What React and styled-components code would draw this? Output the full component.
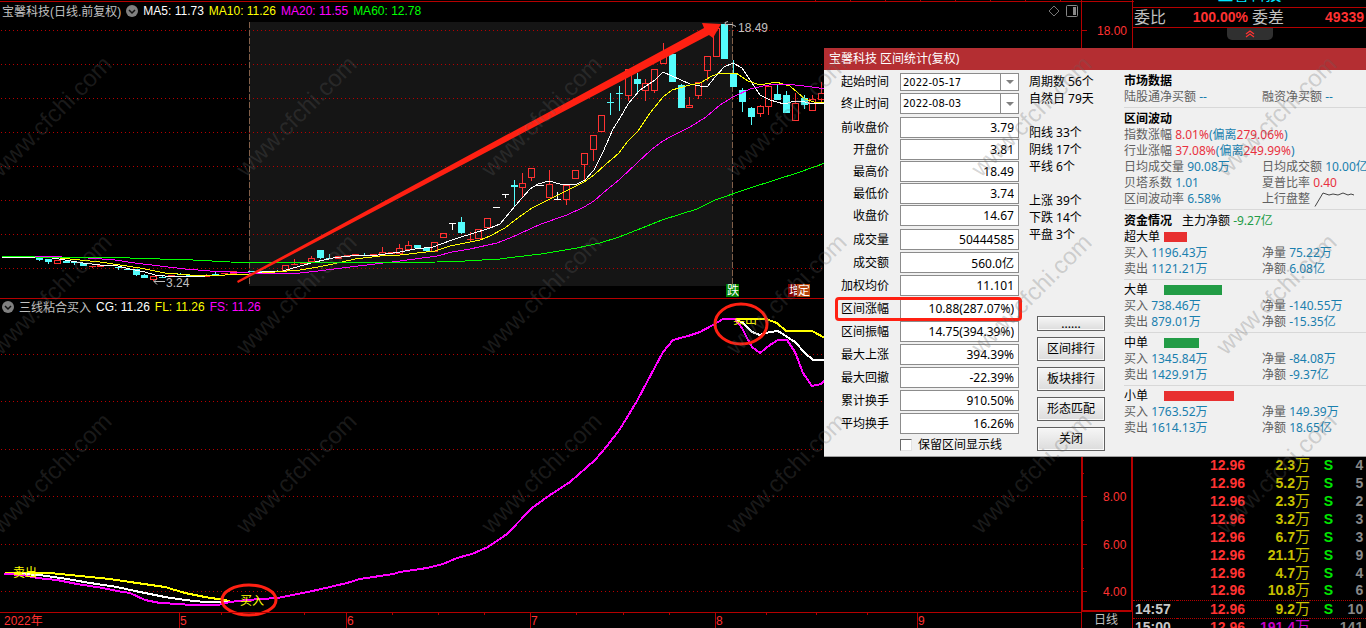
import React from "react";
import styled, { createGlobalStyle, css } from "styled-components";

const SANS = `"Noto Sans", "Noto Sans CJK SC", sans-serif`;
const ARIAL = `"Liberation Sans", "Noto Sans CJK SC", sans-serif`;

const RED = "#ff3232";
const LINE = "#b40000";
const CYAN = "#54fcfc";
const MARK = "#ff2012";

const GlobalStyle = createGlobalStyle`
  * {
    box-sizing: border-box;
  }
  body {
    margin: 0;
    background: #000;
    font-family: ${SANS};
    font-size: 12px;
  }
  button, input, select {
    font: inherit;
    color: inherit;
    margin: 0;
  }
`;

const Page = styled.div`
  position: relative;
  display: grid;
  grid-template-columns: minmax(0, 1fr) 233px;
  height: 100vh;
  min-height: 628px;
  overflow: hidden;
  background: #000;
`;

/* ---------- charts ---------- */

const Board = styled.main`
  display: grid;
  grid-template-columns: minmax(0, 1fr) 52px;
  grid-template-rows: 299px minmax(0, 1fr) 16px;
  font-family: ${ARIAL};
`;

const Panel = styled.section`
  display: flex;
  flex-direction: column;
  min-width: 0;
`;

const PricePanel = styled(Panel)`
  border-bottom: 1px solid ${LINE};
`;

const TickStrip = styled.div`
  height: 2px;
  border-bottom: 1px solid ${LINE};
  background: repeating-linear-gradient(
      to right,
      #000 0 34px,
      ${LINE} 34px 35px
    )
    right / 300px 100% no-repeat;
`;

const PanelHeader = styled.header`
  display: flex;
  align-items: center;
  gap: 5px;
  height: ${(props) => props.$height}px;
  padding: 0 3px 2px 2px;
  color: #c0c0c0;
  white-space: nowrap;
`;

const Title = styled.h2`
  margin: 0;
  font-size: 12px;
  font-weight: 400;
`;

const Legend = styled.span`
  color: ${(props) => props.$color};
`;

const IconButton = styled.button`
  display: flex;
  padding: 0;
  border: 0;
  background: none;
`;

const Tools = styled.div`
  display: flex;
  gap: 6px;
  margin-left: auto;
`;

const Plot = styled.svg`
  display: block;
  width: 100%;
  flex: 1;
  min-height: 0;
  overflow: visible;
`;

const ChartText = styled.text`
  font-family: ${ARIAL};
  font-size: 12px;
  fill: ${(props) => props.$fill};
`;

const Curve = styled.polyline`
  fill: none;
  stroke: ${(props) => props.$color};
  stroke-width: ${(props) => props.$width || 1}px;
  shape-rendering: crispEdges;
`;

const GridLine = styled.line`
  stroke: #b80000;
  stroke-dasharray: 1 3;
  shape-rendering: crispEdges;
`;

const Scale = styled.div`
  display: flex;
  border: 0 solid ${LINE};
  ${(props) =>
    props.$heavy
      ? css`
          border-width: 0 2px 2px 2px;
        `
      : css`
          border-width: 0 1px;
        `}
`;

const TimeAxis = styled.div`
  display: flex;
  border-top: 1px solid ${LINE};
`;

const Period = styled.div`
  padding-left: 12px;
  border: 0 solid ${LINE};
  border-width: 0 1px;
  color: #c0c0c0;
  font-size: 12px;
  line-height: 16px;
`;

// [x, high, top, bottom, low, kind]
const candles = [
  [39, 258, 258, 260, 261, "d"],
  [48, 259, 259, 262, 264, "d"],
  [57, 260, 260, 263, 263, "u"],
  [66, 261, 261, 263, 263, "d"],
  [74, 262, 262, 263, 265, "d"],
  [83, 263, 263, 266, 266, "d"],
  [92, 266, 266, 267, 268, "l"],
  [100, 265, 265, 267, 267, "l"],
  [118, 266, 267, 268, 270, "d"],
  [127, 268, 269, 270, 270, "d"],
  [136, 269, 269, 275, 276, "d"],
  [144, 274, 275, 278, 278, "d"],
  [153, 276, 276, 279, 281, "u"],
  [162, 275, 277, 278, 278, "d"],
  [171, 275, 275, 276, 276, "l"],
  [180, 273, 274, 275, 275, "d"],
  [189, 275, 275, 276, 276, "d"],
  [198, 276, 276, 277, 277, "l"],
  [206, 274, 275, 277, 277, "l"],
  [215, 272, 274, 275, 275, "d"],
  [224, 273, 273, 274, 274, "l"],
  [233, 271, 271, 274, 274, "l"],
  [242, 272, 272, 273, 273, "l"],
  [251, 271, 271, 272, 272, "d"],
  [260, 269, 271, 272, 272, "d"],
  [277, 270, 271, 272, 272, "d"],
  [285, 265, 265, 270, 270, "u"],
  [294, 259, 264, 265, 265, "l"],
  [303, 262, 262, 264, 264, "l"],
  [311, 256, 258, 261, 263, "u"],
  [320, 250, 250, 258, 259, "d"],
  [329, 254, 258, 259, 259, "d"],
  [338, 256, 256, 258, 258, "u"],
  [347, 255, 255, 257, 257, "l"],
  [355, 254, 254, 256, 256, "l"],
  [364, 253, 255, 256, 256, "d"],
  [373, 254, 254, 255, 255, "l"],
  [382, 247, 252, 255, 255, "u"],
  [391, 252, 252, 254, 254, "l"],
  [399, 244, 248, 253, 253, "u"],
  [408, 241, 245, 249, 249, "u"],
  [417, 245, 245, 248, 248, "d"],
  [426, 247, 248, 251, 251, "d"],
  [434, 242, 242, 251, 251, "u"],
  [443, 233, 233, 237, 237, "u"],
  [452, 223, 223, 224, 230, "w"],
  [461, 217, 222, 233, 234, "d"],
  [470, 232, 239, 240, 241, "l"],
  [478, 229, 229, 238, 238, "u"],
  [487, 218, 218, 227, 227, "u"],
  [496, 207, 207, 208, 208, "w"],
  [505, 194, 194, 195, 198, "w"],
  [514, 180, 185, 187, 207, "d"],
  [522, 173, 183, 187, 198, "u"],
  [531, 168, 168, 177, 181, "u"],
  [540, 185, 185, 186, 186, "w"],
  [549, 170, 184, 197, 197, "u"],
  [557, 192, 199, 200, 200, "w"],
  [566, 185, 185, 199, 205, "u"],
  [575, 170, 170, 178, 178, "u"],
  [584, 153, 153, 164, 180, "u"],
  [593, 135, 135, 149, 161, "u"],
  [601, 115, 115, 131, 131, "u"],
  [610, 93, 102, 103, 115, "d"],
  [619, 86, 93, 94, 111, "d"],
  [628, 69, 69, 95, 101, "u"],
  [637, 73, 79, 84, 94, "d"],
  [645, 79, 83, 90, 101, "u"],
  [654, 69, 69, 90, 93, "u"],
  [663, 43, 55, 63, 63, "u"],
  [672, 54, 54, 82, 82, "d"],
  [681, 84, 85, 108, 108, "d"],
  [689, 97, 105, 107, 107, "u"],
  [698, 82, 82, 95, 99, "u"],
  [707, 56, 56, 70, 81, "u"],
  [716, 28, 28, 56, 56, "u"],
  [724, 24, 24, 59, 59, "d"],
  [733, 60, 73, 87, 87, "d"],
  [742, 88, 90, 102, 112, "d"],
  [751, 107, 108, 117, 125, "d"],
  [760, 105, 106, 113, 117, "u"],
  [768, 85, 86, 106, 115, "u"],
  [777, 84, 94, 100, 100, "d"],
  [786, 91, 95, 113, 113, "d"],
  [795, 93, 103, 120, 120, "u"],
  [804, 95, 98, 105, 109, "d"],
  [812, 95, 99, 110, 111, "u"],
  [821, 82, 93, 99, 102, "u"],
];

const ma5 =
  "2,257 28,257 52,258 65,260 83,263 100,265 118,266 130,269 145,272 155,275 165,276 205,276 225,275 249,274 262,272 283,271 300,266 315,262 333,258 350,256 378,255 400,252 415,249 433,247 452,240 461,237 471,234 490,228 500,224 515,206 530,189 538,184 549,181 560,184 577,184 585,180 594,170 603,152 613,129 620,118 628,104 640,90 655,80 663,72 672,76 690,84 700,86 707,87 715,77 724,67 733,63 742,68 750,80 760,95 770,100 784,104 795,101 805,102 812,104 825,103";
const ma10 =
  "2,256 45,257 60,258 80,260 100,262 120,265 140,268 165,273 190,275 225,275 249,274 275,272 300,270 318,267 333,264 355,259 380,256 400,255 435,251 450,246 465,243 480,240 490,236 505,228 515,220 532,208 550,199 566,191 584,182 594,175 605,165 619,153 628,141 638,131 650,113 663,97 672,90 690,85 700,83 712,76 720,73 736,73 748,81 760,85 776,82 790,86 798,93 805,99 814,102 825,102";
const ma20 =
  "2,256 35,256 62,257 88,258 115,260 135,263 160,266 185,269 210,271 249,273 300,273 318,271 350,267 400,261 437,256 452,252 470,249 497,243 510,238 530,229 541,224 567,215 584,207 594,201 603,193 620,179 637,163 651,150 663,141 672,136 690,127 706,117 720,105 733,97 750,89 763,86 775,84 795,85 812,87 825,89";
const ma60 =
  "2,256 35,257 62,257 130,258 160,259 193,260 230,262 290,263 437,262 465,261 500,259 515,257 541,254 577,248 600,243 619,237 637,230 662,220 697,209 715,200 750,188 775,180 800,172 825,163";

const fs =
  "4,574 23,575 37,578 57,580 77,584 103,588 117,591 130,593 145,600 160,603 180,604 190,605 218,605 230,602 247,600 277,598 293,595 317,590 347,583 360,579 393,574 400,572 427,568 443,564 457,558 472,554 488,547 507,534 532,508 550,495 570,482 595,460 607,446 620,429 637,401 647,382 655,367 663,352 673,340 688,336 700,332 713,325 723,319 735,319 742,328 747,338 752,347 760,353 770,345 778,340 787,340 795,352 803,373 812,386 821,384 825,380";
const cgLeft =
  "22,574 40,575 67,579 90,583 117,587 135,591 150,594 165,597 185,600 205,602 230,602";
const cgRight =
  "735,320 742,322 752,332 760,335 770,332 778,331 795,342 805,353 813,360 825,360";
const flLeft =
  "5,573 50,573 70,575 110,579 130,582 165,587 185,593 205,597 230,601";
const flRight = "733,319 766,319 777,323 786,331 812,331 825,338";

function Candle({ data }) {
  const [x, high, top, bottom, low, kind] = data;
  const color = { u: RED, l: RED, d: CYAN, w: "#fff" }[kind];
  const hollow = kind === "u";
  return (
    <g fill={color} shapeRendering="crispEdges">
      <rect x={x} y={high} width="1" height={top - high} />
      <rect x={x} y={bottom} width="1" height={low - bottom} />
      {hollow ? (
        <rect
          x={x - 2.5}
          y={top + 0.5}
          width="6"
          height={bottom - top}
          fill="none"
          stroke={color}
        />
      ) : (
        <rect x={x - 3} y={top} width="7" height={bottom - top} />
      )}
    </g>
  );
}

function MenuDot() {
  return (
    <IconButton aria-label="菜单">
      <svg width="12" height="12" viewBox="0 0 12 12">
        <circle cx="6" cy="6" r="6" fill="#808080" />
        <path d="M3 5l3 3 3-3" fill="none" stroke="#111" strokeWidth="1.5" />
      </svg>
    </IconButton>
  );
}

function Tag({ x, color, children }) {
  return (
    <g>
      <rect x={x} y="284" width="13" height="13" fill={color} />
      <ChartText x={x + 1} y="295" $fill="#fff">
        {children}
      </ChartText>
    </g>
  );
}

function PriceChart() {
  return (
    <PricePanel>
      <TickStrip />
      <PanelHeader $height={19}>
        <Title>宝馨科技(日线.前复权)</Title>
        <MenuDot />
        <Legend $color="#fff">MA5: 11.73</Legend>
        <Legend $color="#ff0">MA10: 11.26</Legend>
        <Legend $color="#f0f">MA20: 11.55</Legend>
        <Legend $color="#0f0">MA60: 12.78</Legend>
        <Tools>
          <IconButton aria-label="标记">
            <svg width="12" height="12" viewBox="0 0 12 12">
              <path d="M6 1l5 5-5 5-5-5z" fill="none" stroke="#777" />
            </svg>
          </IconButton>
          <IconButton aria-label="侧栏">
            <svg width="12" height="12" viewBox="0 0 12 12">
              <rect
                x="0.5"
                y="0.5"
                width="11"
                height="11"
                rx="1"
                fill="none"
                stroke="#888"
              />
              <rect x="7" y="2" width="3" height="8" fill="#888" />
            </svg>
          </IconButton>
        </Tools>
      </PanelHeader>
      <Plot>
        <g transform="translate(0,-21)">
          <rect x="249" y="22" width="484" height="264" fill="#151515" />
          {[30, 64, 98, 132, 166, 200, 234, 268].map((y) => (
            <GridLine key={y} x1="1" x2="100%" y1={y + 0.5} y2={y + 0.5} />
          ))}
          {[249.5, 732.5].map((x) => (
            <line
              key={x}
              x1={x}
              x2={x}
              y1="22"
              y2="285"
              stroke="#82604a"
              strokeDasharray="6 2"
            />
          ))}
          {candles.map((c) => (
            <Candle key={c[0]} data={c} />
          ))}
          <Curve $color="#fff" points={ma5} />
          <Curve $color="#ff0" points={ma10} />
          <Curve $color="#f0f" points={ma20} />
          <Curve $color="#0f0" points={ma60} />
          <g fill="none" stroke="#c0c0c0">
            <path d="M165 281.5h-11M157 278.5l-3 3 3 3" />
            <path d="M736 26.5l-4-2h-6M728 21.5l-3 1 1 4" />
          </g>
          <ChartText x="166" y="287" $fill="#c0c0c0">
            3.24
          </ChartText>
          <ChartText x="738" y="32" $fill="#c0c0c0">
            18.49
          </ChartText>
          <Tag x={726} color="#008000">
            跌
          </Tag>
          <Tag x={788} color="#800000">
            增
          </Tag>
          <Tag x={797} color="#b8460c">
            定
          </Tag>
          <polygon
            points="237,281 704,28 702,23 721,24 713,38 709,35 238,283"
            fill={MARK}
          />
        </g>
      </Plot>
    </PricePanel>
  );
}

function IndicatorChart() {
  return (
    <Panel>
      <PanelHeader $height={17}>
        <MenuDot />
        <Title>三线粘合买入</Title>
        <Legend $color="#fff">CG: 11.26</Legend>
        <Legend $color="#ff0">FL: 11.26</Legend>
        <Legend $color="#f0f">FS: 11.26</Legend>
      </PanelHeader>
      <Plot>
        <defs>
          <clipPath id="panel">
            <rect x="0" y="318" width="100%" height="294" />
          </clipPath>
        </defs>
        <g transform="translate(0,-316)">
          {[354, 401, 449, 496, 544, 591].map((y) => (
            <GridLine key={y} x1="1" x2="100%" y1={y + 0.5} y2={y + 0.5} />
          ))}
          <Curve $color="#ff0" $width={2} points={flLeft} />
          <Curve $color="#fff" $width={2} points={cgLeft} />
          <Curve $color="#ff0" $width={2} points={flRight} />
          <Curve $color="#fff" $width={2} points={cgRight} />
          <Curve $color="#f0f" $width={2} points={fs} />
          <g clipPath="url(#panel)">
            <ChartText x="13" y="577" $fill="#ff0">
              卖出
            </ChartText>
            <ChartText x="240" y="605" $fill="#ff0">
              买入
            </ChartText>
            <ChartText x="733" y="324" $fill="#ff0">
              卖出
            </ChartText>
          </g>
          <g fill="none" stroke={MARK} strokeWidth="3">
            <ellipse cx="249" cy="600" rx="27" ry="15" />
            <ellipse cx="741" cy="324" rx="26" ry="20" />
          </g>
        </g>
      </Plot>
    </Panel>
  );
}

const months = [
  [179, "5"],
  [346, "6"],
  [530, "7"],
  [715, "8"],
  [917, "9"],
];
const weeks = [221, 304, 392, 438, 484, 576, 623, 669, 766, 816, 867];

function Charts() {
  return (
    <Board>
      <PriceChart />
      <Scale>
        <Plot>
          <path d="M0 1.5h52M0 30.5h5" stroke={LINE} />
          <ChartText x="15" y="35" $fill={RED}>
            18.00
          </ChartText>
        </Plot>
      </Scale>
      <IndicatorChart />
      <Scale $heavy>
        <Plot>
          <path
            d="M0 197.5h4M0 245.5h4M0 292.5h4M0 174.5h1M0 221.5h1M0 269.5h1"
            stroke={LINE}
          />
          <ChartText x="20" y="202" $fill={RED}>
            8.00
          </ChartText>
          <ChartText x="20" y="250" $fill={RED}>
            6.00
          </ChartText>
          <ChartText x="20" y="297" $fill={RED}>
            4.00
          </ChartText>
        </Plot>
      </Scale>
      <TimeAxis>
        <Plot>
          <ChartText x="4" y="12" $fill={RED}>
            2022年
          </ChartText>
          {months.map(([x, label]) => (
            <g key={label}>
              <rect x={x} y="0" width="1" height="15" fill={LINE} />
              <ChartText x={x + 1} y="12" $fill={RED}>
                {label}
              </ChartText>
            </g>
          ))}
          {weeks.map((x) => (
            <rect key={x} x={x} y="0" width="1" height="2" fill={LINE} />
          ))}
        </Plot>
      </TimeAxis>
      <Period>日线</Period>
    </Board>
  );
}

/* ---------- quote column ---------- */

const Quote = styled.aside`
  display: flex;
  flex-direction: column;
  overflow: hidden;
  font-family: ${ARIAL};
  font-size: 14px;
`;

const StockName = styled.div`
  display: flex;
  align-items: flex-end;
  justify-content: center;
  height: 7px;
  padding-bottom: 2px;
  overflow: hidden;
  color: #00e5ff;
  font-size: 16px;
  line-height: 20px;
`;

const Commission = styled.div`
  display: grid;
  grid-template-columns: 34px 80px 36px 1fr;
  align-items: center;
  height: 21px;
  padding: 0 2px 0 1px;
  border: solid ${LINE};
  border-width: 1px 0;
  color: #c0c0c0;
  font-size: 16px;
  line-height: 19px;

  b {
    color: ${RED};
    font-size: 14px;
    text-align: right;
  }
  span:nth-of-type(2) {
    padding-left: 4px;
  }
`;

const Collapse = styled.button`
  display: flex;
  justify-content: center;
  align-self: center;
  width: 46px;
  height: 12px;
  padding: 2px 0 0;
  border: 0;
  border-radius: 0 0 5px 5px;
  background: #303030;
`;

const DealsBox = styled.div`
  height: 172px;
  margin-top: auto;
  overflow: hidden;
`;

const Deals = styled.table`
  width: 100%;
  table-layout: fixed;
  border-collapse: collapse;
  font-weight: 700;
`;

const Deal = styled.tr`
  height: 18px;
  border-top: ${(props) => (props.$time ? `1px dotted ${LINE}` : "0")};
`;

const Cell = styled.td`
  padding: 0 0 0 2px;
  color: ${(props) => props.$color};
  line-height: 17px;
  text-align: ${(props) => props.$align || "right"};
  white-space: nowrap;

  small {
    font-size: 15px;
    font-weight: 400;
    line-height: 1;
  }
`;

const deals = [
  ["", "2.3", "4"],
  ["", "5.2", "5"],
  ["", "2.3", "2"],
  ["", "3.2", "3"],
  ["", "6.7", "3"],
  ["", "21.1", "9"],
  ["", "4.7", "4"],
  ["", "10.8", "6"],
  ["14:57", "9.2", "10"],
  ["15:00", "191.4", "141"],
];

function QuoteColumn() {
  return (
    <Quote>
      <StockName>宝馨科技</StockName>
      <Commission>
        <span>委比</span>
        <b>100.00%</b>
        <span>委差</span>
        <b>49339</b>
      </Commission>
      <Collapse aria-label="收起">
        <svg width="10" height="8" viewBox="0 0 10 8">
          <path
            d="M1 4l4-3 4 3M1 7l4-3 4 3"
            fill="none"
            stroke={RED}
            strokeWidth="1.2"
          />
        </svg>
      </Collapse>
      <DealsBox>
        <Deals>
          <colgroup>
            <col width="44" />
            <col width="68" />
            <col width="65" />
            <col width="23" />
            <col />
          </colgroup>
          <tbody>
            {deals.map(([time, volume, count], i) => (
              <Deal key={i} $time={time}>
                <Cell $color="#c8c8c8" $align="left">
                  {time}
                </Cell>
                <Cell $color={RED}>12.96</Cell>
                <Cell $color={time === "15:00" ? "#c800c8" : "#c8c000"}>
                  {volume}
                  <small>万</small>
                </Cell>
                <Cell $color="#00e600">{time === "15:00" ? "" : "S"}</Cell>
                <Cell $color="#888">{count}&thinsp;</Cell>
              </Deal>
            ))}
          </tbody>
        </Deals>
      </DealsBox>
    </Quote>
  );
}

/* ---------- statistics dialog ---------- */

const Dialog = styled.div`
  position: absolute;
  top: 48px;
  right: 0;
  width: 542px;
  border-bottom: 1px solid #a0a0a0;
  background: #f0f0f0;
  color: #000;
`;

const DialogTitle = styled.h1`
  margin: 0;
  padding: 0 5px;
  background: #b42e32;
  color: #fff;
  font-size: 12px;
  font-weight: 400;
  line-height: 22px;
`;

const DialogBody = styled.div`
  display: grid;
  grid-template-columns: 195px 85px minmax(0, 1fr);
  column-gap: 10px;
`;

const Form = styled.form`
  display: flex;
  flex-direction: column;
  gap: 3px;
  padding: 3px 0;
`;

const FieldGroup = styled.div`
  display: flex;
  flex-direction: column;
  gap: ${(props) => props.$gap}px;
`;

const Field = styled.div`
  position: relative;
  display: grid;
  grid-template-columns: 65px minmax(0, 1fr);
  column-gap: 11px;
  align-items: center;

  label {
    text-align: right;
    line-height: 18px;
  }
  ${(props) =>
    props.$marked &&
    css`
      &::after {
        content: "";
        position: absolute;
        inset: -1px -3px -2px 11px;
        border: 3px solid ${MARK};
        border-radius: 4px;
        pointer-events: none;
      }
    `}
`;

const Value = styled.input`
  width: 100%;
  height: 21px;
  padding: 0 4px;
  border: 1px solid #8c8c8c;
  background: #fff;
  text-align: right;
`;

const DateBox = styled.div`
  position: relative;
  height: ${(props) => props.$height}px;

  select {
    appearance: none;
    display: block;
    width: 100%;
    height: 100%;
    padding: 0 20px 0 2px;
    border: 1px solid #8c8c8c;
    border-radius: 0;
    background: #fff;
    font-family: "DejaVu Sans", sans-serif;
    font-size: 10px;
  }
`;

const Arrow = styled.span`
  position: absolute;
  inset: 0 0 0 auto;
  display: flex;
  align-items: center;
  justify-content: center;
  width: 19px;
  border-left: 1px solid #8c8c8c;
  pointer-events: none;

  &::before {
    content: "";
    border: 4px solid transparent;
    border-top-color: #808080;
    border-bottom: 0;
  }
`;

const KeepLine = styled.label`
  display: flex;
  align-items: center;
  gap: 6px;
  padding-left: 76px;
  line-height: 16px;

  input {
    appearance: none;
    width: 12px;
    height: 12px;
    border: 1px solid #696969;
    border-right-color: #e3e3e3;
    border-bottom-color: #e3e3e3;
    background: #fff;
  }
`;

const Middle = styled.div`
  display: flex;
  flex-direction: column;
  gap: 17px;
  padding: 3px 0 5px;
`;

const Counts = styled.ul`
  margin: 0;
  padding: 0;
  list-style: none;
  line-height: 17px;
`;

const Actions = styled.div`
  display: flex;
  flex-direction: column;
  gap: 6px;
  margin-top: auto;
  padding-left: 8px;
`;

const Action = styled.button`
  width: 68px;
  height: ${(props) => (props.$slim ? 15 : 24)}px;
  padding: 0;
  border: 1px solid #606060;
  background: linear-gradient(#f6f6f6, #dcdcdc);
  box-shadow: inset 0 0 0 1px #fafafa;
  line-height: 12px;
`;

const Report = styled.div`
  overflow: hidden;
  color: #606060;
  white-space: nowrap;
`;

const Section = styled.section`
  padding: 2px 0;
  border-bottom: ${(props) => (props.$last ? "0" : "1px solid #d8d8d8")};
`;

const Heading = styled.h3`
  margin: 0;
  color: #000;
  font-size: 12px;
  line-height: 17px;
`;

const Summary = styled.div`
  display: flex;
  gap: 10px;
  color: #000;
  line-height: 17px;
`;

const Pair = styled.div`
  display: grid;
  grid-template-columns: 138px 1fr;
  line-height: 16px;
`;

const Trend = styled.span`
  display: flex;
  align-items: center;
  gap: 4px;
`;

const Num = styled.span`
  color: ${(props) => props.$color || "#1a7fae"};
`;

const OrderName = styled.div`
  display: grid;
  grid-template-columns: 36px auto;
  column-gap: 4px;
  align-items: center;
  color: #000;
  line-height: 16px;
`;

const Bar = styled.i`
  height: 10px;
  background: ${(props) => (props.$up ? "#e83030" : "#229c46")};
`;

const UP = "#e83040";

const prices = [
  ["前收盘价", "3.79"],
  ["开盘价", "3.81"],
  ["最高价", "18.49"],
  ["最低价", "3.74"],
  ["收盘价", "14.67"],
];

const stats = [
  ["成交量", "50444585"],
  ["成交额", "560.0亿"],
  ["加权均价", "11.101"],
  ["区间涨幅", "10.88(287.07%)"],
  ["区间振幅", "14.75(394.39%)"],
  ["最大上涨", "394.39%"],
  ["最大回撤", "-22.39%"],
  ["累计换手", "910.50%"],
  ["平均换手", "16.26%"],
];

const counts = [
  ["周期数 56个", "自然日 79天"],
  ["阳线 33个", "阴线 17个", "平线 6个"],
  ["上涨 39个", "下跌 14个", "平盘 3个"],
];

const orders = [
  ["超大单", 23, true, "1196.43万", "75.22万", "1121.21万", "6.08亿"],
  ["大单", 58, false, "738.46万", "-140.55万", "879.01万", "-15.35亿"],
  ["中单", 35, false, "1345.84万", "-84.08万", "1429.91万", "-9.37亿"],
  ["小单", 70, true, "1763.52万", "149.39万", "1614.13万", "18.65亿"],
];

function DateField({ id, label, value, height }) {
  return (
    <Field>
      <label htmlFor={id}>{label}</label>
      <DateBox $height={height}>
        <select id={id} defaultValue={value}>
          <option>{value}</option>
        </select>
        <Arrow />
      </DateBox>
    </Field>
  );
}

function ValueField({ label, value }) {
  return (
    <Field $marked={label === "区间涨幅"}>
      <label htmlFor={label}>{label}</label>
      <Value id={label} defaultValue={value} />
    </Field>
  );
}

function Order({ data, last, children }) {
  const [name, width, up, buy, netVolume, sell, netAmount] = data;
  return (
    <Section $last={last}>
      {children}
      <OrderName>
        {name}
        <Bar $up={up} style={{ width }} />
      </OrderName>
      <Pair>
        <span>
          买入 <Num>{buy}</Num>
        </span>
        <span>
          净量 <Num>{netVolume}</Num>
        </span>
      </Pair>
      <Pair>
        <span>
          卖出 <Num>{sell}</Num>
        </span>
        <span>
          净额 <Num>{netAmount}</Num>
        </span>
      </Pair>
    </Section>
  );
}

function StatsReport() {
  return (
    <Report>
      <Section>
        <Heading>市场数据</Heading>
        <Pair>
          <span>
            陆股通净买额 <Num>--</Num>
          </span>
          <span>
            融资净买额 <Num>--</Num>
          </span>
        </Pair>
      </Section>
      <Section>
        <Heading>区间波动</Heading>
        <Pair>
          <span>
            指数涨幅 <Num $color={UP}>8.01%</Num>
            <Num>(偏离</Num>
            <Num $color={UP}>279.06%</Num>
            <Num>)</Num>
          </span>
        </Pair>
        <Pair>
          <span>
            行业涨幅 <Num $color={UP}>37.08%</Num>
            <Num>(偏离</Num>
            <Num $color={UP}>249.99%</Num>
            <Num>)</Num>
          </span>
        </Pair>
        <Pair>
          <span>
            日均成交量 <Num>90.08万</Num>
          </span>
          <span>
            日均成交额 <Num>10.00亿</Num>
          </span>
        </Pair>
        <Pair>
          <span>
            贝塔系数 <Num>1.01</Num>
          </span>
          <span>
            夏普比率 <Num $color={UP}>0.40</Num>
          </span>
        </Pair>
        <Pair>
          <span>
            区间波动率 <Num>6.58%</Num>
          </span>
          <Trend>
            上行盘整
            <svg width="40" height="15" viewBox="0 0 40 15">
              <path
                d="M1 14.5L9 1l6 2 4-1 5 1 5-2 5 2 3-1 3 1"
                fill="none"
                stroke="#444"
              />
            </svg>
          </Trend>
        </Pair>
      </Section>
      {orders.map((order, i) => (
        <Order key={order[0]} data={order} last={i === orders.length - 1}>
          {i === 0 && (
            <Summary>
              <b>资金情况</b>
              <span>
                主力净额 <Num $color="#229c46">-9.27亿</Num>
              </span>
            </Summary>
          )}
        </Order>
      ))}
    </Report>
  );
}

function StatsDialog() {
  return (
    <Dialog role="dialog" aria-labelledby="stats-title">
      <DialogTitle id="stats-title">宝馨科技 区间统计(复权)</DialogTitle>
      <DialogBody>
        <Form>
          <FieldGroup $gap={2}>
            <DateField
              id="from"
              label="起始时间"
              value="2022-05-17"
              height={18}
            />
            <DateField id="to" label="终止时间" value="2022-08-03" height={21} />
          </FieldGroup>
          <FieldGroup $gap={1}>
            {prices.map(([label, value]) => (
              <ValueField key={label} label={label} value={value} />
            ))}
          </FieldGroup>
          <FieldGroup $gap={2}>
            {stats.map(([label, value]) => (
              <ValueField key={label} label={label} value={value} />
            ))}
          </FieldGroup>
          <KeepLine>
            <input type="checkbox" />
            保留区间显示线
          </KeepLine>
        </Form>
        <Middle>
          {counts.map((group) => (
            <Counts key={group[0]}>
              {group.map((line) => (
                <li key={line}>{line}</li>
              ))}
            </Counts>
          ))}
          <Actions>
            <Action $slim>......</Action>
            <Action>区间排行</Action>
            <Action>板块排行</Action>
            <Action>形态匹配</Action>
            <Action>关闭</Action>
          </Actions>
        </Middle>
        <StatsReport />
      </DialogBody>
    </Dialog>
  );
}

/* ---------- site watermark over everything ---------- */

const Watermark = styled.svg`
  position: absolute;
  inset: 0;
  width: 100%;
  height: 100%;
  pointer-events: none;

  text {
    font-family: ${ARIAL};
    font-size: 24px;
    fill: rgba(100, 100, 100, 0.27);
  }
`;

const markRows = [178, 356, 535];
const markCols = [1, 246, 491, 736, 981, 1226];

export default function App() {
  return (
    <Page>
      <GlobalStyle />
      <Charts />
      <QuoteColumn />
      <StatsDialog />
      <Watermark aria-hidden="true">
        {markRows.map((y) =>
          markCols.map((x) => (
            <text key={`${x}-${y}`} transform={`translate(${x},${y}) rotate(-45)`}>
              www.cfchi.com
            </text>
          ))
        )}
      </Watermark>
    </Page>
  );
}
